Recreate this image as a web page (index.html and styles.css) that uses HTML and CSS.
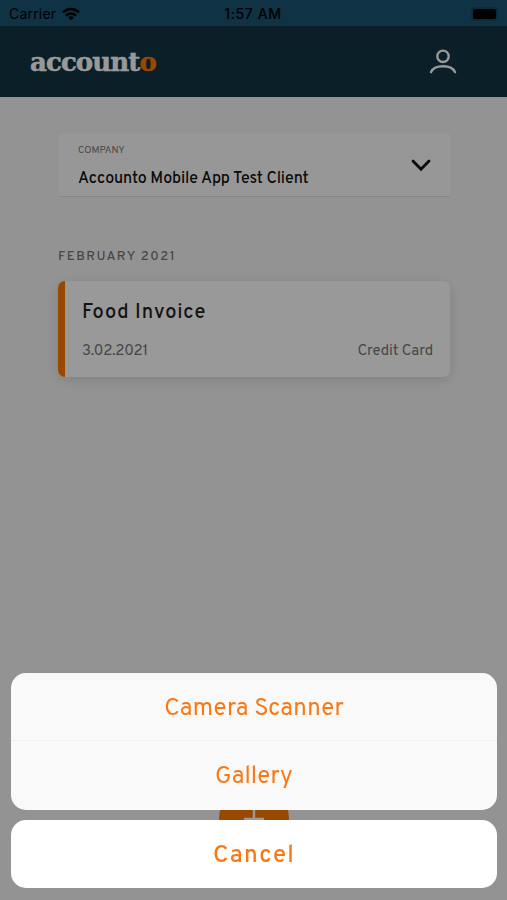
FILE: index.html
```html
<!DOCTYPE html>
<html lang="en">
<head>
  <meta charset="UTF-8" />
  <meta name="viewport" content="width=device-width, initial-scale=1.0" />
  <title>Accounto</title>
  <link rel="stylesheet" href="styles.css">
</head>
<body>

<div class="screen">
  <div class="status-bar">
    <div class="carrier">
      <span>Carrier</span>
      <svg width="18" height="14" viewBox="0 0 18 14" fill="none" stroke="#000" stroke-width="2.5">
        <path d="M1 5.4C5.5 0.8 12.5 0.8 17 5.4" />
        <path d="M4 8.6c2.8-2.8 7.2-2.8 10 0" />
        <path d="M9 13.2L6.2 10.4c1.6-1.4 4-1.4 5.6 0z" fill="#000" stroke="none" />
      </svg>
    </div>
    <div class="time">1:57 AM</div>
    <div class="battery"></div>
  </div>

  <header class="header">
    <div class="logo">account<span class="logo-accent">o</span></div>
    <svg class="user-icon" width="28" height="26" viewBox="0 0 28 26" fill="none" stroke="#fff" stroke-width="2.4" stroke-linecap="round">
      <circle cx="14" cy="7.3" r="5.7" />
      <path d="M2 23.2C5 15.2 23 15.2 26 23.2" />
    </svg>
  </header>

  <main class="content">
    <div class="company-select">
      <div>
        <div class="company-label">COMPANY</div>
        <div class="company-name">Accounto Mobile App Test Client</div>
      </div>
      <svg width="20" height="13" viewBox="0 0 20 13" fill="none" stroke="#111" stroke-width="2.8" stroke-linecap="round">
        <path d="M2 2l8 8.3L18 2" />
      </svg>
    </div>

    <h2 class="month">FEBRUARY 2021</h2>

    <div class="invoice">
      <div class="invoice-title">Food Invoice</div>
      <div class="invoice-row">
        <span class="invoice-date">3.02.2021</span>
        <span class="invoice-method">Credit Card</span>
      </div>
    </div>
  </main>

  <div class="add-btn">
    <svg width="20" height="20" viewBox="0 0 20 20" stroke="#fff" stroke-width="2.4">
      <path d="M10 0v20M0 10h20" />
    </svg>
  </div>
</div>

<div class="overlay">
  <div class="sheet">
    <div class="sheet-item camera">Camera Scanner</div>
    <div class="sheet-item gallery">Gallery</div>
  </div>
  <div class="sheet-cancel">Cancel</div>
</div>

</body>
</html>
```

FILE: styles.css
```css
* {
  margin: 0;
  padding: 0;
  box-sizing: border-box;
}
body {
  font-family: Overpass, Roboto, sans-serif;
  background: #f6f6f6;
  color: #222;
}

.screen {
  position: relative;
  height: 900px;
  overflow: hidden;
}

/* status bar */
.status-bar {
  display: grid;
  grid-template-columns: 1fr 1fr 1fr;
  align-items: center;
  height: 26px;
  padding: 1px 10px 0 9px;
  background: #195472;
  color: #000;
  font-family: Inter, sans-serif;
  font-size: 14px;
}
.carrier {
  display: flex;
  align-items: center;
  gap: 6px;
  letter-spacing: 0.2px;
}
.time {
  font-weight: 500;
  letter-spacing: 0.6px;
  text-align: center;
}
.battery {
  justify-self: end;
  width: 23px;
  height: 10px;
  margin-right: 1px;
  border-radius: 2px;
  background: #000;
  box-shadow: 0 0 0 2px #15475f;
}

/* header */
.header {
  display: flex;
  align-items: center;
  justify-content: space-between;
  height: 71px;
  padding: 0 50px 0 30px;
  background: #113444;
}
.logo {
  font-family: "DejaVu Serif", serif;
  font-size: 26px;
  font-weight: bold;
  line-height: 30px;
  letter-spacing: -0.9px;
  color: #fff;
  -webkit-text-stroke: 0.5px currentColor;
}
.logo-accent {
  color: #ff7800;
}

/* content */
.content {
  padding: 37px 57px 0 58px;
}
.company-select {
  display: flex;
  align-items: center;
  justify-content: space-between;
  height: 63px;
  margin-left: 1px;
  padding: 0 19px 0 19px;
  background: #fcfcfc;
  border-bottom: 1px solid #e2e2e2;
}
.company-label {
  padding-top: 3px;
  font-size: 10px;
  line-height: 12px;
  color: #777;
}
.company-name {
  margin-top: 12px;
  font-size: 16px;
  font-weight: 500;
  line-height: 20px;
  letter-spacing: -0.12px;
  color: #111;
}
.month {
  margin-top: 50px;
  font-size: 13px;
  font-weight: 500;
  line-height: 20px;
  letter-spacing: 1.5px;
  color: #777;
}
.invoice {
  height: 96px;
  margin-top: 14px;
  padding: 20px 17px 0;
  background: #fff;
  border-left: 7px solid #ff7800;
  border-radius: 7px;
  box-shadow: 0 3px 14px rgba(0, 0, 0, 0.13);
}
.invoice-title {
  font-size: 20px;
  font-weight: 500;
  line-height: 24px;
  letter-spacing: 0.85px;
}
.invoice-row {
  display: flex;
  justify-content: space-between;
  margin-top: 17px;
  font-size: 15px;
  line-height: 20px;
  letter-spacing: -0.1px;
  color: #777;
}
.invoice-date {
  letter-spacing: -0.25px;
}

/* floating button, half hidden by the sheet */
.add-btn {
  position: absolute;
  left: 219px;
  bottom: 46px;
  display: flex;
  align-items: center;
  justify-content: center;
  width: 70px;
  height: 70px;
  border-radius: 50%;
  background: #ff7800;
}

/* action sheet */
.overlay {
  position: fixed;
  inset: 0;
  display: flex;
  flex-direction: column;
  justify-content: flex-end;
  gap: 10px;
  padding: 0 10px 12px 11px;
  background: rgba(0, 0, 0, 0.4);
  color: #fa7814;
  font-size: 24px;
  text-align: center;
}
.sheet,
.sheet-cancel {
  border-radius: 15px;
  overflow: hidden;
}
.sheet {
  background: #f9f9f9;
}
.sheet-item {
  height: 67px;
  line-height: 72px;
  letter-spacing: 0.1px;
}
.sheet-item + .sheet-item {
  height: 70px;
  line-height: 73px;
  border-top: 1px solid #f0f0f0;
}
.sheet-cancel {
  height: 68px;
  line-height: 72px;
  background: #fff;
  font-weight: 500;
  letter-spacing: 1.2px;
}
```
